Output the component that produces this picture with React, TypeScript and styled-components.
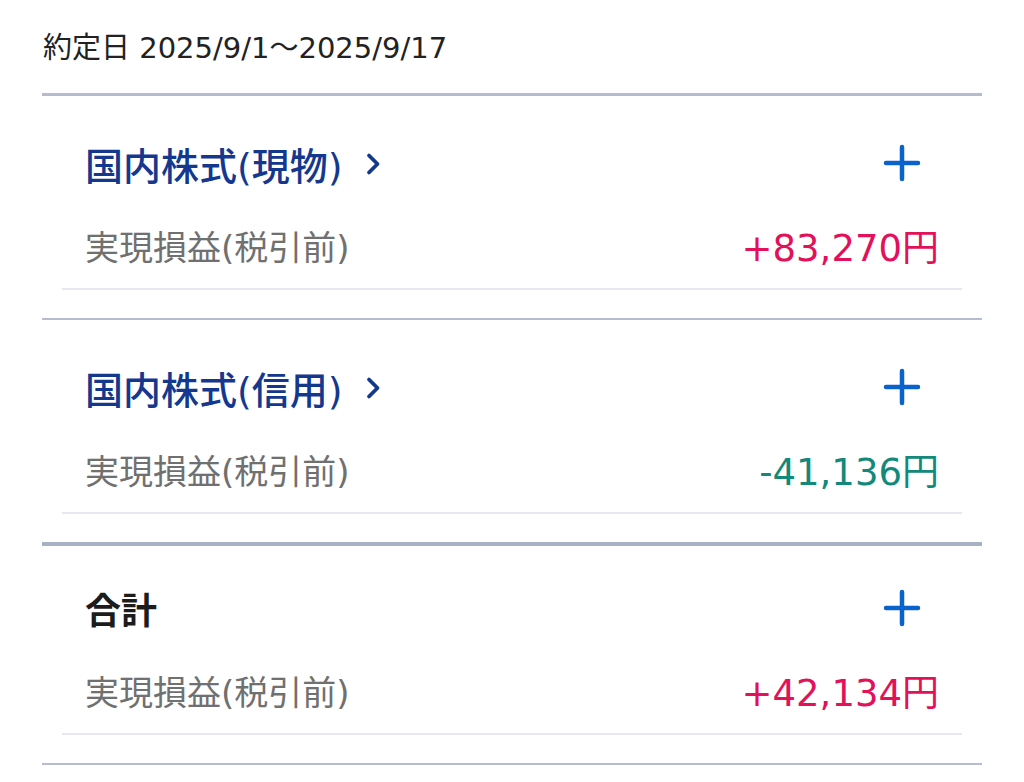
import React from "react";
import styled, { createGlobalStyle } from "styled-components";

const GlobalStyle = createGlobalStyle`
    body {
        margin: 0;
        background: #ffffff;
        font-family: "DejaVu Sans", "Noto Sans CJK JP", sans-serif;
    }
`

type Row = {
    title: string
    link: boolean
    value: string
    tone: "plus" | "minus"
    thick?: boolean
}

const rows: Row[] = [
    { title: "国内株式(現物)", link: true, value: "+83,270円", tone: "plus" },
    { title: "国内株式(信用)", link: true, value: "-41,136円", tone: "minus" },
    { title: "合計", link: false, value: "+42,134円", tone: "plus", thick: true },
]

const PlusIcon = () => (
    <svg width="38" height="38" viewBox="0 0 38 38">
        <path d="M19 3v32M3 19h32" stroke="#0a62cc" strokeWidth="4.5" strokeLinecap="round"/>
    </svg>
)

const Chevron = () => (
    <svg width="16" height="24" viewBox="0 0 16 24">
        <path d="M4 3.5l8.5 8.5-8.5 8.5" stroke="#15388f" strokeWidth="3.8" fill="none" strokeLinecap="round" strokeLinejoin="round"/>
    </svg>
)

export default function App() {
    return (
        <>
            <GlobalStyle/>
            <Page>
                <DateLine>約定日 2025/9/1〜2025/9/17</DateLine>
                {rows.map((r, i) => (
                    <Section key={r.title} $thick={r.thick} $first={i === 0}>
                        <Header>
                            <Title $link={r.link}>
                                {r.title}
                                {r.link && <ChevronWrap><Chevron/></ChevronWrap>}
                            </Title>
                            <PlusButton><PlusIcon/></PlusButton>
                        </Header>
                        <ValueRow>
                            <Label>実現損益(税引前)</Label>
                            <Value $tone={r.tone}>{r.value}</Value>
                        </ValueRow>
                    </Section>
                ))}
                <BottomLine/>
            </Page>
        </>
    )
}

const Page = styled.div`
    padding: 0 42px;
    width: 940px;
`

const DateLine = styled.div`
    font-size: 29px;
    line-height: 48px;
    color: #222222;
    padding-top: 24px;
    padding-left: 1px;
    height: 48px;
    margin-bottom: 21px;
`

const Section = styled.section<{ $thick?: boolean; $first?: boolean }>`
    border-top: ${p => (p.$thick ? "4px" : p.$first ? "3px" : "2px")} solid ${p => (p.$thick ? "#a9b1c6" : "#b4bccd")};
    padding: ${p => (p.$thick ? "23px" : "28px")} 20px 28px;
`

const Header = styled.div`
    display: flex;
    align-items: center;
    justify-content: space-between;
    height: 78px;
    padding: 0 23px;
`

const Title = styled.div<{ $link: boolean }>`
    display: flex;
    align-items: center;
    font-size: ${p => (p.$link ? "38px" : "36px")};
    font-weight: ${p => (p.$link ? 500 : 700)};
    color: ${p => (p.$link ? "#15388f" : "#1c1c1c")};
`

const ChevronWrap = styled.span`
    display: inline-flex;
    margin-left: 22px;
    margin-top: 2px;
`

const PlusButton = styled.div`
    display: flex;
    margin-right: 18px;
`

const ValueRow = styled.div`
    display: flex;
    align-items: center;
    justify-content: space-between;
    height: 86px;
    padding: 0 23px;
    border-bottom: 2px solid #e6e8ef;
`

const Label = styled.div`
    font-size: 34px;
    color: #707070;
`

const Value = styled.div<{ $tone: "plus" | "minus" }>`
    font-size: 37px;
    color: ${p => (p.$tone === "plus" ? "#e3105a" : "#12897a")};
`

const BottomLine = styled.div`
    border-top: 2px solid #b4bccd;
`
